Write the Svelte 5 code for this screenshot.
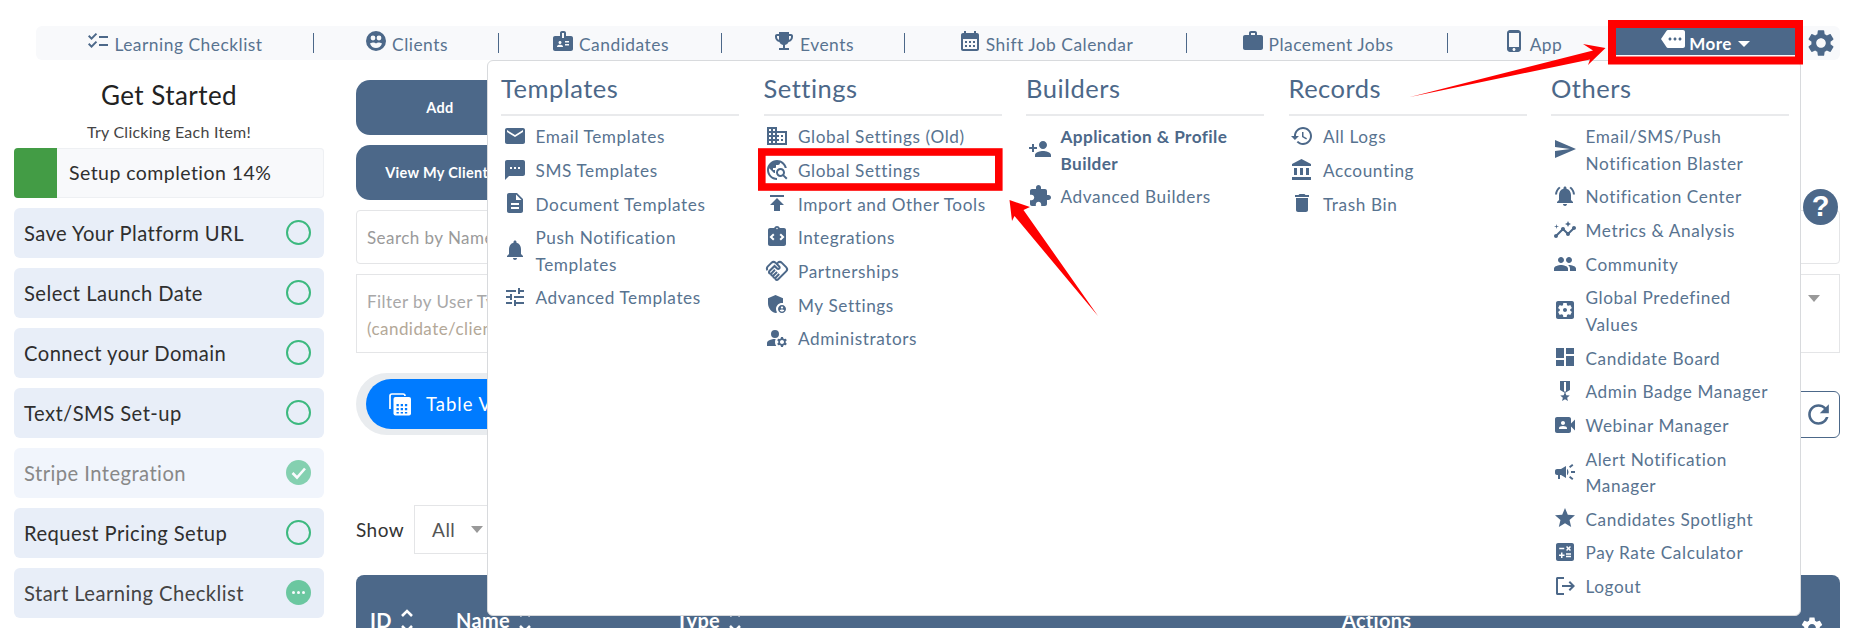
<script>
	// material-style glyphs, 24x24 viewBox
	const icons = {
		checklist: 'M22 7h-9v2h9V7zm0 8h-9v2h9v-2zM5.54 11L2 7.46l1.41-1.41 2.12 2.12 4.24-4.24 1.41 1.41L5.54 11zm0 8L2 15.46l1.41-1.41 2.12 2.12 4.24-4.24 1.41 1.41L5.54 19z',
		clients: 'M12 2a10 10 0 1 0 0 20 10 10 0 0 0 0-20zM9 6.6a2.4 2.4 0 1 0 0 4.8 2.4 2.4 0 0 0 0-4.8zM15 6.6a2.4 2.4 0 1 0 0 4.8 2.4 2.4 0 0 0 0-4.8zM6 14.5c1 3 3.3 4.5 6 4.5s5-1.5 6-4.5c-1.3-.8-2.6-1-3.5-1-1 0-1.8.5-2.5 1-.7-.5-1.5-1-2.5-1-.9 0-2.2.2-3.5 1z',
		badge: 'M20 7h-5V4c0-1.1-.9-2-2-2h-2c-1.1 0-2 .9-2 2v3H4c-1.1 0-2 .9-2 2v11c0 1.1.9 2 2 2h16c1.1 0 2-.9 2-2V9c0-1.1-.9-2-2-2zM9 12c.83 0 1.5.67 1.5 1.5S9.83 15 9 15s-1.5-.67-1.5-1.5S8.17 12 9 12zm3 6H6v-.43c0-.6.36-1.15.92-1.39.64-.28 1.34-.43 2.08-.43s1.44.15 2.08.43c.55.24.92.78.92 1.39V18zm1-9h-2V4h2v5zm5 7.5h-4V15h4v1.5zm0-3h-4V12h4v1.5z',
		trophy: 'M19 5h-2V3H7v2H5c-1.1 0-2 .9-2 2v1c0 2.55 1.92 4.63 4.39 4.94.63 1.5 1.98 2.63 3.61 2.96V19H7v2h10v-2h-4v-3.1c1.63-.33 2.98-1.46 3.61-2.96C19.08 12.63 21 10.55 21 8V7c0-1.1-.9-2-2-2zM5 8V7h2v3.82C5.84 10.4 5 9.3 5 8zm14 0c0 1.3-.84 2.4-2 2.82V7h2v1z',
		calendar: 'M19 4h-1V2h-2v2H8V2H6v2H5c-1.11 0-1.99.9-1.99 2L3 20c0 1.1.89 2 2 2h14c1.1 0 2-.9 2-2V6c0-1.1-.9-2-2-2zm0 16H5V10h14v10zM9 14H7v-2h2v2zm4 0h-2v-2h2v2zm4 0h-2v-2h2v2zm-8 4H7v-2h2v2zm4 0h-2v-2h2v2zm4 0h-2v-2h2v2z',
		work: 'M20 6h-4V4c0-1.11-.89-2-2-2h-4c-1.11 0-2 .89-2 2v2H4c-1.11 0-1.99.89-1.99 2L2 19c0 1.11.89 2 2 2h16c1.11 0 2-.89 2-2V8c0-1.11-.89-2-2-2zm-6 0h-4V4h4v2z',
		phone: 'M16 1H8C6.34 1 5 2.34 5 4v16c0 1.66 1.34 3 3 3h8c1.66 0 3-1.34 3-3V4c0-1.66-1.34-3-3-3zm-4 21c-.83 0-1.5-.67-1.5-1.5S11.17 19 12 19s1.5.67 1.5 1.5S12.83 22 12 22zm5-4H7V4h10v14z',
		more: 'M22 3H7c-.69 0-1.23.35-1.59.88L0 12l5.41 8.11c.36.53.9.89 1.59.89h15c1.1 0 2-.9 2-2V5c0-1.1-.9-2-2-2zM9 13.5c-.83 0-1.5-.67-1.5-1.5s.67-1.5 1.5-1.5 1.5.67 1.5 1.5-.67 1.5-1.5 1.5zm5 0c-.83 0-1.5-.67-1.5-1.5s.67-1.5 1.5-1.5 1.5.67 1.5 1.5-.67 1.5-1.5 1.5zm5 0c-.83 0-1.5-.67-1.5-1.5s.67-1.5 1.5-1.5 1.5.67 1.5 1.5-.67 1.5-1.5 1.5z',
		gear: 'M19.14 12.94c.04-.3.06-.61.06-.94 0-.32-.02-.64-.07-.94l2.03-1.58c.18-.14.23-.41.12-.61l-1.92-3.32c-.12-.22-.37-.29-.59-.22l-2.39.96c-.5-.38-1.03-.7-1.62-.94l-.36-2.54c-.04-.24-.24-.41-.48-.41h-3.84c-.24 0-.43.17-.47.41l-.36 2.54c-.59.24-1.13.57-1.62.94l-2.39-.96c-.22-.08-.47 0-.59.22L2.74 8.87c-.12.21-.08.47.12.61l2.03 1.58c-.05.3-.09.63-.09.94s.02.64.07.94l-2.03 1.58c-.18.14-.23.41-.12.61l1.92 3.32c.12.22.37.29.59.22l2.39-.96c.5.38 1.03.7 1.62.94l.36 2.54c.05.24.24.41.48.41h3.84c.24 0 .44-.17.47-.41l.36-2.54c.59-.24 1.13-.56 1.62-.94l2.39.96c.22.08.47 0 .59-.22l1.92-3.32c.12-.22.07-.47-.12-.61l-2.01-1.58zM12 15.6c-1.98 0-3.6-1.62-3.6-3.6s1.62-3.6 3.6-3.6 3.6 1.62 3.6 3.6-1.62 3.6-3.6 3.6z',
		refresh: 'M17.65 6.35C16.2 4.9 14.21 4 12 4c-4.42 0-7.99 3.58-7.99 8s3.57 8 7.99 8c3.73 0 6.84-2.55 7.73-6h-2.08c-.82 2.33-3.04 4-5.65 4-3.31 0-6-2.69-6-6s2.69-6 6-6c1.66 0 3.14.69 4.22 1.78L13 11h7V4l-2.35 2.35z',
		email: 'M20 4H4c-1.1 0-2 .9-2 2v12c0 1.1.9 2 2 2h16c1.1 0 2-.9 2-2V6c0-1.1-.9-2-2-2zm0 4l-8 5-8-5V6l8 5 8-5v2z',
		sms: 'M20 2H4c-1.1 0-1.99.9-1.99 2L2 22l4-4h14c1.1 0 2-.9 2-2V4c0-1.1-.9-2-2-2zM9 11H7V9h2v2zm4 0h-2V9h2v2zm4 0h-2V9h2v2z',
		doc: 'M14 2H6c-1.1 0-1.99.9-1.99 2L4 20c0 1.1.89 2 1.99 2H18c1.1 0 2-.9 2-2V8l-6-6zm2 16H8v-2h8v2zm0-4H8v-2h8v2zm-3-5V3.5L18.5 9H13z',
		bell: 'M12 22c1.1 0 2-.9 2-2h-4c0 1.1.89 2 2 2zm6-6v-5c0-3.07-1.64-5.64-4.5-6.32V4c0-.83-.67-1.5-1.5-1.5s-1.5.67-1.5 1.5v.68C7.63 5.36 6 7.92 6 11v5l-2 2v1h16v-1l-2-2z',
		tune: 'M3 17v2h6v-2H3zM3 5v2h10V5H3zm10 16v-2h8v-2h-8v-2h-2v6h2zM7 9v2H3v2h4v2h2V9H7zm14 4v-2H11v2h10zm-6-4h2V7h4V5h-4V3h-2v6z',
		domain: 'M12 7V3H2v18h20V7H12zM6 19H4v-2h2v2zm0-4H4v-2h2v2zm0-4H4V9h2v2zm0-4H4V5h2v2zm4 12H8v-2h2v2zm0-4H8v-2h2v2zm0-4H8V9h2v2zm0-4H8V5h2v2zm10 12h-8v-2h2v-2h-2v-2h2v-2h-2V9h8v10zm-2-8h-2v2h2v-2zm0 4h-2v2h2v-2z',
		explore: 'M19.3 16.9c.4-.7.7-1.5.7-2.4 0-2.5-2-4.5-4.5-4.5S11 12 11 14.5s2 4.5 4.5 4.5c.9 0 1.7-.3 2.4-.7l3.2 3.2 1.4-1.4-3.2-3.2zm-3.8.1c-1.4 0-2.5-1.1-2.5-2.5s1.1-2.5 2.5-2.5 2.5 1.1 2.5 2.5-1.1 2.5-2.5 2.5zM12 20v2C6.48 22 2 17.52 2 12S6.48 2 12 2c4.84 0 8.87 3.44 9.8 8h-2.07c-.64-2.46-2.4-4.47-4.73-5.41V5c0 1.1-.9 2-2 2h-2v2c0 .55-.45 1-1 1H8v2h2v3H9l-4.79-4.79C4.08 10.79 4 11.38 4 12c0 4.41 3.59 8 8 8z',
		publish: 'M5 4v2h14V4H5zm0 10h4v6h6v-6h4l-7-7-7 7z',
		integrations: 'M19 3h-4.18C14.4 1.84 13.3 1 12 1s-2.4.84-2.82 2H5c-1.1 0-2 .9-2 2v14c0 1.1.9 2 2 2h14c1.1 0 2-.9 2-2V5c0-1.1-.9-2-2-2zm-7-.25c.41 0 .75.34.75.75s-.34.75-.75.75-.75-.34-.75-.75.34-.75.75-.75zM9.5 14.09l-1.41 1.41L4.5 12l3.59-3.5L9.5 9.91 7.33 12l2.17 2.09zM15.91 15.5l-1.41-1.41L16.67 12 14.5 9.91l1.41-1.41L19.5 12l-3.59 3.5z',
		handshake: 'M12.22 19.85c-.18.18-.5.21-.71 0a.504.504 0 0 1 0-.71l3.39-3.39-1.41-1.41-3.39 3.39c-.19.2-.51.19-.71 0a.504.504 0 0 1 0-.71l3.39-3.39-1.41-1.41-3.39 3.39c-.18.18-.5.21-.71 0a.513.513 0 0 1 0-.71l3.39-3.39-1.42-1.41-3.39 3.39c-.18.18-.5.21-.71 0a.513.513 0 0 1 0-.71L9.52 8.4l1.87 1.86c.95.95 2.59.94 3.54 0 .98-.98.98-2.56 0-3.54l-1.86-1.86.28-.28c.78-.78 2.05-.78 2.83 0l4.24 4.24c.78.78.78 2.05 0 2.83l-8.2 8.2zm9.61-6.78a4.008 4.008 0 0 0 0-5.66l-4.24-4.24a4.008 4.008 0 0 0-5.66 0l-.28.28-.28-.28a4.008 4.008 0 0 0-5.66 0L2.17 6.71a3.992 3.992 0 0 0-.4 5.19l1.45-1.45a2 2 0 0 1 .37-2.33l3.54-3.54c.78-.78 2.05-.78 2.83 0l3.56 3.56c.18.18.21.5 0 .71-.21.21-.53.18-.71 0L9.52 5.57l-5.8 5.79c-.98.97-.98 2.56 0 3.54.39.39.89.63 1.42.7a2.458 2.458 0 0 0 2.12 2.12 2.458 2.458 0 0 0 2.12 2.12c.08.54.32 1.04.71 1.42.47.47 1.1.73 1.77.73.67 0 1.3-.26 1.77-.73l8.2-8.19z',
		shield: 'M17 11c.34 0 .67.04 1 .09V6.27L10.5 3 3 6.27v4.91c0 4.54 3.2 8.79 7.5 9.82.55-.13 1.08-.32 1.6-.55-.69-.98-1.1-2.17-1.1-3.45 0-3.31 2.69-6 6-6zM17 13c-2.21 0-4 1.79-4 4s1.79 4 4 4 4-1.79 4-4-1.79-4-4-4zm0 1.38c.62 0 1.12.51 1.12 1.12s-.51 1.12-1.12 1.12-1.12-.51-1.12-1.12.5-1.12 1.12-1.12zm0 5.37c-.93 0-1.74-.46-2.24-1.17.05-.72 1.51-1.08 2.24-1.08s2.19.36 2.24 1.08c-.5.71-1.31 1.17-2.24 1.17z',
		admins: 'M10.67 13.02c-.22-.01-.44-.02-.67-.02-2.42 0-4.68.67-6.61 1.82-.88.52-1.39 1.5-1.39 2.53V20h9.26c-.79-1.13-1.26-2.51-1.26-4 0-1.07.25-2.07.67-2.98zM10 12a4 4 0 1 0 0-8 4 4 0 0 0 0 8zM20.75 16c0-.22-.03-.42-.06-.63l1.14-1.01-1-1.73-1.45.49c-.32-.27-.68-.48-1.08-.63L18 11h-2l-.3 1.49c-.4.15-.76.36-1.08.63l-1.45-.49-1 1.73 1.14 1.01c-.03.21-.06.41-.06.63s.03.42.06.63l-1.14 1.01 1 1.73 1.45-.49c.32.27.68.48 1.08.63L16 21h2l.3-1.49c.4-.15.76-.36 1.08-.63l1.45.49 1-1.73-1.14-1.01c.03-.21.06-.41.06-.63zM17 18c-1.1 0-2-.9-2-2s.9-2 2-2 2 .9 2 2-.9 2-2 2z',
		personAdd: 'M15 12c2.21 0 4-1.79 4-4s-1.79-4-4-4-4 1.79-4 4 1.79 4 4 4zm-9-2V7H4v3H1v2h3v3h2v-3h3v-2H6zm9 4c-2.67 0-8 1.34-8 4v2h16v-2c0-2.66-5.33-4-8-4z',
		extension: 'M20.5 11H19V7c0-1.1-.9-2-2-2h-4V3.5C13 2.12 11.88 1 10.5 1S8 2.12 8 3.5V5H4c-1.1 0-1.99.9-1.99 2v3.8H3.5c1.49 0 2.7 1.21 2.7 2.7s-1.21 2.7-2.7 2.7H2V20c0 1.1.9 2 2 2h3.8v-1.5c0-1.49 1.21-2.7 2.7-2.7 1.49 0 2.7 1.21 2.7 2.7V22H17c1.1 0 2-.9 2-2v-4h1.5c1.38 0 2.5-1.12 2.5-2.5S21.88 11 20.5 11z',
		history: 'M13 3c-4.97 0-9 4.03-9 9H1l3.89 3.89.07.14L9 12H6c0-3.87 3.13-7 7-7s7 3.13 7 7-3.13 7-7 7c-1.93 0-3.68-.79-4.94-2.06l-1.42 1.42C8.27 19.99 10.51 21 13 21c4.97 0 9-4.03 9-9s-4.03-9-9-9zm-1 5v5l4.28 2.54.72-1.21-3.5-2.08V8H12z',
		bank: 'M4 10v7h3v-7H4zm6 0v7h3v-7h-3zM2 22h19v-3H2v3zm14-12v7h3v-7h-3zm-4.5-9L2 6v2h19V6l-9.5-5z',
		trash: 'M6 19c0 1.1.9 2 2 2h8c1.1 0 2-.9 2-2V7H6v12zM19 4h-3.5l-1-1h-5l-1 1H5v2h14V4z',
		send: 'M2.01 21L23 12 2.01 3 2 10l15 2-15 2z',
		bellActive: 'M7.58 4.08L6.15 2.65C3.75 4.48 2.17 7.3 2.03 10.5h2c.15-2.65 1.51-4.97 3.55-6.42zm12.39 6.42h2c-.15-3.2-1.73-6.02-4.12-7.85l-1.42 1.43c2.02 1.45 3.39 3.77 3.54 6.42zM18 11c0-3.07-1.64-5.64-4.5-6.32V4c0-.83-.67-1.5-1.5-1.5s-1.5.67-1.5 1.5v.68C7.63 5.36 6 7.92 6 11v5l-2 2v1h16v-1l-2-2v-5zm-6 11c.14 0 .27-.01.4-.04.65-.14 1.18-.58 1.44-1.18.1-.24.15-.5.15-.78h-4c.01 1.1.9 2 2.01 2z',
		insights: 'M21 8c-1.45 0-2.26 1.44-1.93 2.51l-3.55 3.56c-.3-.09-.74-.09-1.04 0l-2.55-2.55C12.27 10.45 11.46 9 10 9c-1.45 0-2.27 1.44-1.93 2.52l-4.56 4.55C2.44 15.74 1 16.55 1 18c0 1.1.9 2 2 2 1.45 0 2.26-1.44 1.93-2.51l4.55-4.56c.3.09.74.09 1.04 0l2.55 2.55C12.73 16.55 13.54 18 15 18c1.45 0 2.27-1.44 1.93-2.52l3.56-3.55c1.07.33 2.51-.48 2.51-1.93 0-1.1-.9-2-2-2zM15 9l.94-2.07L18 6l-2.06-.93L15 3l-.92 2.07L12 6l2.08.93zM3.5 11L4 9l2-.5L4 8l-.5-2L3 8l-2 .5L3 9z',
		people: 'M16 11c1.66 0 2.99-1.34 2.99-3S17.66 5 16 5c-1.66 0-3 1.34-3 3s1.34 3 3 3zm-8 0c1.66 0 2.99-1.34 2.99-3S9.66 5 8 5C6.34 5 5 6.34 5 8s1.34 3 3 3zm0 2c-2.33 0-7 1.17-7 3.5V19h14v-2.5c0-2.33-4.67-3.5-7-3.5zm8 0c-.29 0-.62.02-.97.05 1.16.84 1.97 1.97 1.97 3.45V19h6v-2.5c0-2.33-4.67-3.5-7-3.5z',
		gearBox: 'M19 3H5c-1.1 0-2 .9-2 2v14c0 1.1.9 2 2 2h14c1.1 0 2-.9 2-2V5c0-1.1-.9-2-2-2zm-1.75 9c0 .23-.02.46-.05.68l1.48 1.16c.13.11.17.3.08.45l-1.4 2.42c-.09.15-.27.21-.43.15l-1.74-.7c-.36.28-.76.51-1.18.69l-.26 1.85c-.03.17-.18.3-.35.3h-2.8c-.17 0-.32-.13-.35-.29l-.26-1.85c-.43-.18-.82-.41-1.18-.69l-1.74.7c-.16.06-.34 0-.43-.15l-1.4-2.42c-.09-.15-.05-.34.08-.45l1.48-1.16c-.03-.23-.05-.46-.05-.69 0-.23.02-.46.05-.68l-1.48-1.16c-.13-.11-.17-.3-.08-.45l1.4-2.42c.09-.15.27-.21.43-.15l1.74.7c.36-.28.76-.51 1.18-.69l.26-1.85c.03-.17.18-.3.35-.3h2.8c.17 0 .32.13.35.29l.26 1.85c.43.18.82.41 1.18.69l1.74-.7c.16-.06.34 0 .43.15l1.4 2.42c.09.15.05.34-.08.45l-1.48 1.16c.03.23.05.46.05.68zM12 10c-1.1 0-2 .9-2 2s.9 2 2 2 2-.9 2-2-.9-2-2-2z',
		dashboard: 'M3 13h8V3H3v10zm0 8h8v-6H3v6zm10 0h8V11h-8v10zm0-18v6h8V3h-8z',
		medal: 'M17 10.43V2H7v8.43c0 .35.18.68.49.86l4.18 2.51-.99 2.34-3.41.29 2.59 2.24L9.07 22 12 20.23 14.93 22l-.78-3.33 2.59-2.24-3.41-.29-.99-2.34 4.18-2.51c.3-.18.48-.5.48-.86zm-4 1.8l-1 .6-1-.6V3h2v9.23z',
		video: 'M18 10.48V6c0-1.1-.9-2-2-2H4c-1.1 0-2 .9-2 2v12c0 1.1.9 2 2 2h12c1.1 0 2-.9 2-2v-4.48l4 3.98v-11l-4 3.98zM10 8c1.1 0 2 .9 2 2s-.9 2-2 2-2-.9-2-2 .9-2 2-2zm4 8H6v-.57c0-.81.48-1.53 1.22-1.85.85-.37 1.79-.58 2.78-.58.99 0 1.93.21 2.78.58.74.32 1.22 1.04 1.22 1.85V16z',
		campaign: 'M18 11v2h4v-2h-4zm-2 6.61c.96.71 2.21 1.65 3.2 2.39.4-.53.8-1.07 1.2-1.6-.99-.74-2.24-1.68-3.2-2.4-.4.54-.8 1.08-1.2 1.61zM20.4 5.6c-.4-.53-.8-1.07-1.2-1.6-.99.74-2.24 1.68-3.2 2.4.4.53.8 1.07 1.2 1.6.96-.72 2.21-1.65 3.2-2.4zM4 9c-1.1 0-2 .9-2 2v2c0 1.1.9 2 2 2h1v4h2v-4h1l5 3V6L8 9H4zm11.5 3c0-1.33-.58-2.53-1.5-3.35v6.69c.92-.81 1.5-2.01 1.5-3.34z',
		star: 'M12 17.27L18.18 21l-1.64-7.03L22 9.24l-7.19-.61L12 2 9.19 8.63 2 9.24l5.46 4.73L5.82 21z',
		calc: 'M19 3H5c-1.1 0-2 .9-2 2v14c0 1.1.9 2 2 2h14c1.1 0 2-.9 2-2V5c0-1.1-.9-2-2-2zm-5.97 4.06L14.09 6l1.41 1.41L16.91 6l1.06 1.06-1.41 1.41 1.41 1.41-1.06 1.06-1.41-1.4-1.41 1.41-1.06-1.06 1.41-1.41-1.41-1.42zm-6.78.66h5v1.5h-5v-1.5zM11.5 16h-2v2H8v-2H6v-1.5h2v-2h1.5v2h2V16zm6.5 1.25h-5v-1.5h5v1.5zm0-2.5h-5v-1.5h5v1.5z',
		logout: 'M3 4.5C3 3.67 3.67 3 4.5 3H11v2H5v14h6v2H4.5c-.83 0-1.5-.67-1.5-1.5v-15zM17 7l5 5-5 5-1.4-1.4 2.6-2.6H9v-2h9.2l-2.6-2.6L17 7z'
	};

	const navItems = [
		{ label: 'Learning Checklist', icon: 'checklist' },
		{ label: 'Clients', icon: 'clients' },
		{ label: 'Candidates', icon: 'badge' },
		{ label: 'Events', icon: 'trophy' },
		{ label: 'Shift Job Calendar', icon: 'calendar' },
		{ label: 'Placement Jobs', icon: 'work' },
		{ label: 'App', icon: 'phone' }
	];

	const steps = [
		{ label: 'Save Your Platform URL', state: 'open' },
		{ label: 'Select Launch Date', state: 'open' },
		{ label: 'Connect your Domain', state: 'open' },
		{ label: 'Text/SMS Set-up', state: 'open' },
		{ label: 'Stripe Integration', state: 'done' },
		{ label: 'Request Pricing Setup', state: 'open' },
		{ label: 'Start Learning Checklist', state: 'busy' }
	];

	const menu = [
		{
			title: 'Templates',
			rows: [
				{ label: 'Email Templates', icon: 'email' },
				{ label: 'SMS Templates', icon: 'sms' },
				{ label: 'Document Templates', icon: 'doc' },
				{ label: 'Push Notification\nTemplates', icon: 'bell' },
				{ label: 'Advanced Templates', icon: 'tune' }
			]
		},
		{
			title: 'Settings',
			rows: [
				{ label: 'Global Settings (Old)', icon: 'domain' },
				{ label: 'Global Settings', icon: 'explore' },
				{ label: 'Import and Other Tools', icon: 'publish' },
				{ label: 'Integrations', icon: 'integrations' },
				{ label: 'Partnerships', icon: 'handshake' },
				{ label: 'My Settings', icon: 'shield' },
				{ label: 'Administrators', icon: 'admins' }
			]
		},
		{
			title: 'Builders',
			rows: [
				{ label: 'Application & Profile\nBuilder', icon: 'personAdd', bold: true },
				{ label: 'Advanced Builders', icon: 'extension' }
			]
		},
		{
			title: 'Records',
			rows: [
				{ label: 'All Logs', icon: 'history' },
				{ label: 'Accounting', icon: 'bank' },
				{ label: 'Trash Bin', icon: 'trash' }
			]
		},
		{
			title: 'Others',
			rows: [
				{ label: 'Email/SMS/Push\nNotification Blaster', icon: 'send' },
				{ label: 'Notification Center', icon: 'bellActive' },
				{ label: 'Metrics & Analysis', icon: 'insights' },
				{ label: 'Community', icon: 'people' },
				{ label: 'Global Predefined\nValues', icon: 'gearBox' },
				{ label: 'Candidate Board', icon: 'dashboard' },
				{ label: 'Admin Badge Manager', icon: 'medal' },
				{ label: 'Webinar Manager', icon: 'video' },
				{ label: 'Alert Notification\nManager', icon: 'campaign' },
				{ label: 'Candidates Spotlight', icon: 'star' },
				{ label: 'Pay Rate Calculator', icon: 'calc' },
				{ label: 'Logout', icon: 'logout' }
			]
		}
	];
</script>

<div class="page">
	<nav class="topnav">
		{#each navItems as item, i}
			<a class="nav-item" class:last={i === navItems.length - 1} href="#top">
				<svg class="nav-icon" viewBox="0 0 24 24"><path fill-rule="evenodd" d={icons[item.icon]} /></svg>
				<span>{item.label}</span>
			</a>
		{/each}
		<button class="more-btn" type="button">
			<svg class="more-icon" viewBox="0 0 24 24"><path d={icons.more} /></svg>
			<span>More</span>
			<i class="more-caret"></i>
		</button>
		<button class="gear-btn" type="button" aria-label="Settings">
			<svg viewBox="0 0 24 24"><path d={icons.gear} /></svg>
		</button>
	</nav>

	<div class="body">
		<aside class="sidebar">
			<h2>Get Started</h2>
			<p class="try">Try Clicking Each Item!</p>
			<div class="progress">
				<div class="progress-fill"></div>
				<span>Setup completion 14%</span>
			</div>
			{#each steps as step}
				<div class="step {step.state}">
					<span>{step.label}</span>
					{#if step.state === 'open'}
						<i class="ring"></i>
					{:else if step.state === 'done'}
						<svg class="dot" viewBox="0 0 25 25">
							<circle cx="12.5" cy="12.5" r="12.5" fill="#3cb97f" />
							<path d="M6.5 13l4.5 4.5 8-9" fill="none" stroke="#fff" stroke-width="2.6" />
						</svg>
					{:else}
						<svg class="dot" viewBox="0 0 25 25">
							<circle cx="12.5" cy="12.5" r="12.5" fill="#3cb97f" />
							<circle cx="7.5" cy="12.5" r="1.5" fill="#fff" />
							<circle cx="12.5" cy="12.5" r="1.5" fill="#fff" />
							<circle cx="17.5" cy="12.5" r="1.5" fill="#fff" />
						</svg>
					{/if}
				</div>
			{/each}
		</aside>

		<main class="content">
			<button class="action" type="button">Add</button>
			<button class="action" type="button">View My Clients</button>
			<div class="field search">Search by Name, Email or Phone</div>
			<div class="field filter">
				<span>Filter by User Type<br /><span class="tan">(candidate/client)</span></span>
				<i class="select-caret"></i>
			</div>
			<div class="view-row">
				<div class="view-pill">
					<button class="view-btn" type="button">
						<svg viewBox="0 0 24 24" width="24" height="24">
							<path d="M2 17V4a2 2 0 0 1 2-2h11a2 2 0 0 1 2 2" fill="none" stroke="#fff" stroke-width="1.7" />
							<rect x="5.5" y="5" width="17.5" height="18.5" rx="2" fill="#fff" />
							<path d="M8.5 12h2.3v2.2H8.5zm4.2 0H15v2.2h-2.3zm4.2 0h2.3v2.2h-2.3zM8.5 16h2.3v2.2H8.5zm4.2 0H15v2.2h-2.3zm4.2 0h2.3v2.2h-2.3zM8.5 20h2.3v1.6H8.5zm4.2 0H15v1.6h-2.3zm4.2 0h2.3v1.6h-2.3z" fill="#007bff" />
						</svg>
						<span>Table View</span>
					</button>
				</div>
				<button class="refresh" type="button" aria-label="Refresh">
					<svg viewBox="0 0 24 24"><path d={icons.refresh} /></svg>
				</button>
			</div>
			<div class="show-row">
				<span>Show</span>
				<div class="show-select">All<i class="select-caret"></i></div>
			</div>
			<div class="table-head">
				{#each [['ID', 'id'], ['Name', 'name'], ['Type', 'type']] as [label, cls]}
					<span class="th {cls}">
						{label}
						<svg class="sort" viewBox="0 0 14 24">
							<path d="M2 8l5-5 5 5M2 18l5 5 5-5" fill="none" stroke="#fff" stroke-width="2.6" />
						</svg>
					</span>
				{/each}
				<span class="th actions">Actions</span>
				<svg class="th-gear" viewBox="0 0 24 24"><path d={icons.gear} /></svg>
			</div>
		</main>
	</div>

	<div class="mega">
		{#each menu as col}
			<section>
				<h3>{col.title}</h3>
				{#each col.rows as row}
					<a class="mega-row" class:bold={row.bold} href="#top">
						<svg viewBox="0 0 24 24"><path d={icons[row.icon]} /></svg>
						<span>{row.label}</span>
					</a>
				{/each}
			</section>
		{/each}
	</div>

	<button class="help" type="button">?</button>

	<!-- red annotations drawn on top of the screenshot -->
	<svg class="marks" viewBox="0 0 1853 628" width="1853" height="628">
		<rect x="1612" y="24" width="187" height="36.5" fill="none" stroke="#f00" stroke-width="8" />
		<rect x="761.8" y="152" width="237" height="35" fill="none" stroke="#f00" stroke-width="7.6" />
		<polygon points="1410,97 1593,50.5 1583,44 1605.5,48 1588,65 1590,59.5" fill="#f00" />
		<polygon points="1098,316 1014.5,216 1012,221 1009.5,200 1030,207 1023.5,210" fill="#f00" />
	</svg>
</div>

<style>
	:global(body) {
		margin: 0;
		background: #fff;
	}

	.page {
		position: relative;
		width: 1853px;
		height: 628px;
		overflow: hidden;
		font-family: Lato, 'Open Sans', sans-serif;
		color: #2f2f2f;
		letter-spacing: 0.45px;
	}

	.topnav {
		position: absolute;
		top: 26px;
		left: 36px;
		width: 1804px;
		height: 34px;
		display: grid;
		grid-template-columns: 278px 185px 223px 183px 282px 261px 168px 179px 1fr;
		align-items: center;
		background: #f8f9fb;
		border-radius: 6px;
	}

	.nav-item {
		display: flex;
		align-items: center;
		justify-content: center;
		gap: 4px;
		height: 20px;
		border-right: 1.5px solid #4c6889;
		color: #587390;
		text-decoration: none;
		font-size: 17.4px;
		letter-spacing: 0.5px;
	}

	.nav-item.last {
		border-right: none;
	}

	.nav-item span {
		position: relative;
		top: 1px;
	}

	.nav-icon {
		width: 24px;
		height: 24px;
		margin-top: -5px;
		fill: #4c6889;
	}

	.more-btn {
		display: flex;
		align-items: center;
		justify-content: center;
		gap: 4px;
		height: 29px;
		margin-top: -5px;
		border: none;
		background: #4c6889;
		color: #fff;
		font: 700 17px Lato, sans-serif;
		letter-spacing: 0.4px;
		padding: 0;
	}

	.more-btn span {
		position: relative;
		top: 2.5px;
	}

	.more-icon {
		width: 24px;
		height: 24px;
		fill: #fff;
		margin-top: -4px;
	}

	.more-caret {
		position: relative;
		top: 3px;
		width: 0;
		height: 0;
		margin-left: 2px;
		border: 6px solid transparent;
		border-top-color: #fff;
		border-bottom: none;
	}

	.gear-btn {
		border: none;
		background: none;
		padding: 0 0 0 10px;
		height: 32px;
	}

	.gear-btn svg {
		display: block;
		width: 32px;
		height: 32px;
		fill: #4c6889;
	}

	.body {
		display: grid;
		grid-template-columns: 310px 1484px;
		column-gap: 32px;
		padding: 77px 0 0 14px;
	}

	.sidebar h2 {
		margin: 0;
		font-size: 26px;
		font-weight: 400;
		line-height: 36px;
		text-align: center;
		color: #222;
	}

	.try {
		margin: 7px 0 3.5px;
		font-size: 16px;
		line-height: 24px;
		text-align: center;
		letter-spacing: 0.25px;
		color: #444;
	}

	.progress {
		display: flex;
		align-items: center;
		height: 50px;
		margin-bottom: 10px;
		background: #f8f9fb;
		border-radius: 4px;
		box-shadow: inset 0 0 0 1px #eef0f3;
		font-size: 19.5px;
	}

	.progress-fill {
		width: 43px;
		height: 100%;
		margin-right: 12px;
		background: #439c45;
		border-radius: 4px 0 0 4px;
	}

	.step {
		display: flex;
		align-items: center;
		justify-content: space-between;
		height: 50px;
		margin-bottom: 10px;
		padding: 0 13px 0 10px;
		background: #e8eef8;
		border-radius: 6px;
		font-size: 20.2px;
	}

	.step.done {
		background: #f1f5fc;
		color: #888;
	}

	.step.busy {
		color: #444;
	}

	.ring {
		box-sizing: border-box;
		width: 25px;
		height: 25px;
		border: 2.5px solid #3cb97f;
		border-radius: 50%;
	}

	.dot {
		width: 25px;
		height: 25px;
	}

	.done .dot {
		opacity: 0.6;
	}

	.busy .dot {
		opacity: 0.72;
	}

	.content {
		display: flex;
		flex-direction: column;
		align-items: flex-start;
		padding-top: 3px;
	}

	.action {
		width: 168px;
		height: 55px;
		margin-bottom: 10px;
		border: none;
		border-radius: 14px;
		background: #4c6889;
		color: #fff;
		font: 700 14.5px Lato, sans-serif;
		letter-spacing: 0.3px;
	}

	.field {
		box-sizing: border-box;
		width: 100%;
		border: 1px solid #e4e5e7;
		color: #9a9a9a;
		font-size: 17px;
	}

	.search {
		height: 54px;
		line-height: 54px;
		padding-left: 10px;
		border-radius: 4px;
	}

	.filter {
		position: relative;
		height: 79px;
		margin-top: 10px;
		padding: 12.5px 10px 0;
		line-height: 27px;
		color: #a8a8a8;
	}

	.tan {
		color: #b3a898;
	}

	.select-caret {
		display: inline-block;
		width: 0;
		height: 0;
		border: 6px solid transparent;
		border-top: 7px solid #999;
		border-bottom: none;
	}

	.filter .select-caret {
		position: absolute;
		right: 19px;
		top: 20px;
	}

	.view-row {
		display: flex;
		justify-content: space-between;
		width: 100%;
		margin-top: 20px;
	}

	.view-pill {
		width: 400px;
		height: 62px;
		padding: 6px 10px;
		box-sizing: border-box;
		background: #e9ecef;
		border-radius: 31px;
	}

	.view-btn {
		display: flex;
		align-items: center;
		gap: 14px;
		width: 220px;
		height: 50px;
		padding: 0 0 0 22px;
		border: none;
		border-radius: 25px;
		background: #007bff;
		color: #fff;
		font: 400 18.5px Lato, sans-serif;
		letter-spacing: 1px;
	}

	.refresh {
		display: flex;
		align-items: center;
		width: 60px;
		height: 47px;
		margin-top: 18px;
		padding: 0 0 0 22px;
		border: 1px solid #4c6889;
		border-radius: 6px;
		background: #fff;
	}

	.refresh svg {
		width: 31px;
		height: 31px;
		fill: #4c6889;
	}

	.show-row {
		display: flex;
		align-items: center;
		gap: 10px;
		margin-top: 67px;
		font-size: 19px;
		color: #333;
	}

	.show-select {
		box-sizing: border-box;
		display: flex;
		align-items: center;
		justify-content: space-between;
		width: 80px;
		height: 49px;
		padding: 0 10px 0 17px;
		border: 1px solid #e4e5e7;
		font-size: 19px;
		color: #555;
	}

	.table-head {
		position: relative;
		width: 100%;
		height: 60px;
		margin-top: 21px;
		background: #4c6889;
		border-radius: 8px 8px 0 0;
		color: #fff;
		font-weight: 700;
		font-size: 20px;
		letter-spacing: 0.3px;
	}

	.th {
		position: absolute;
		top: 33px;
		display: flex;
		align-items: center;
		height: 24px;
		line-height: 24px;
	}

	.th.id { left: 14px; }
	.th.name { left: 100px; }
	.th.type { left: 320px; }
	.th.actions { left: 986px; }

	.sort {
		width: 14px;
		height: 24px;
		margin-left: 8px;
	}

	.th-gear {
		position: absolute;
		left: 1443px;
		top: 40px;
		width: 26px;
		height: 26px;
		fill: #fff;
	}

	.mega {
		position: absolute;
		top: 60px;
		left: 487px;
		box-sizing: border-box;
		width: 1314px;
		height: 556px;
		padding: 0 12px 0 13px;
		display: grid;
		grid-template-columns: repeat(5, 238px);
		column-gap: 24.5px;
		background: #fff;
		border: 1px solid #d8dadd;
		border-radius: 6px;
		color: #4c6889;
	}

	.mega h3 {
		margin: 0 0 4.7px;
		padding: 9px 0 8px;
		height: 36px;
		border-bottom: 2px solid #e9eaec;
		font-size: 25.5px;
		font-weight: 400;
		line-height: 36px;
		letter-spacing: 0.5px;
	}

	.mega-row {
		display: flex;
		align-items: center;
		padding: 3.65px 0;
		color: #587390;
		text-decoration: none;
		font-size: 17.2px;
		line-height: 26.4px;
		letter-spacing: 0.6px;
		white-space: pre-line;
	}

	.mega-row svg {
		flex: none;
		width: 24px;
		height: 24px;
		margin: -3px 9px 0 1.5px;
		fill: #4c6889;
	}

	.mega-row.bold {
		font-weight: 700;
		color: #4c6889;
		letter-spacing: 0.4px;
	}

	.help {
		position: absolute;
		left: 1803px;
		top: 188.5px;
		width: 35px;
		height: 36px;
		padding: 0;
		border: none;
		border-radius: 50%;
		background: #4c6889;
		color: #fff;
		font: 700 29px 'Liberation Sans', sans-serif;
	}

	.marks {
		position: absolute;
		top: 0;
		left: 0;
		pointer-events: none;
	}
</style>
